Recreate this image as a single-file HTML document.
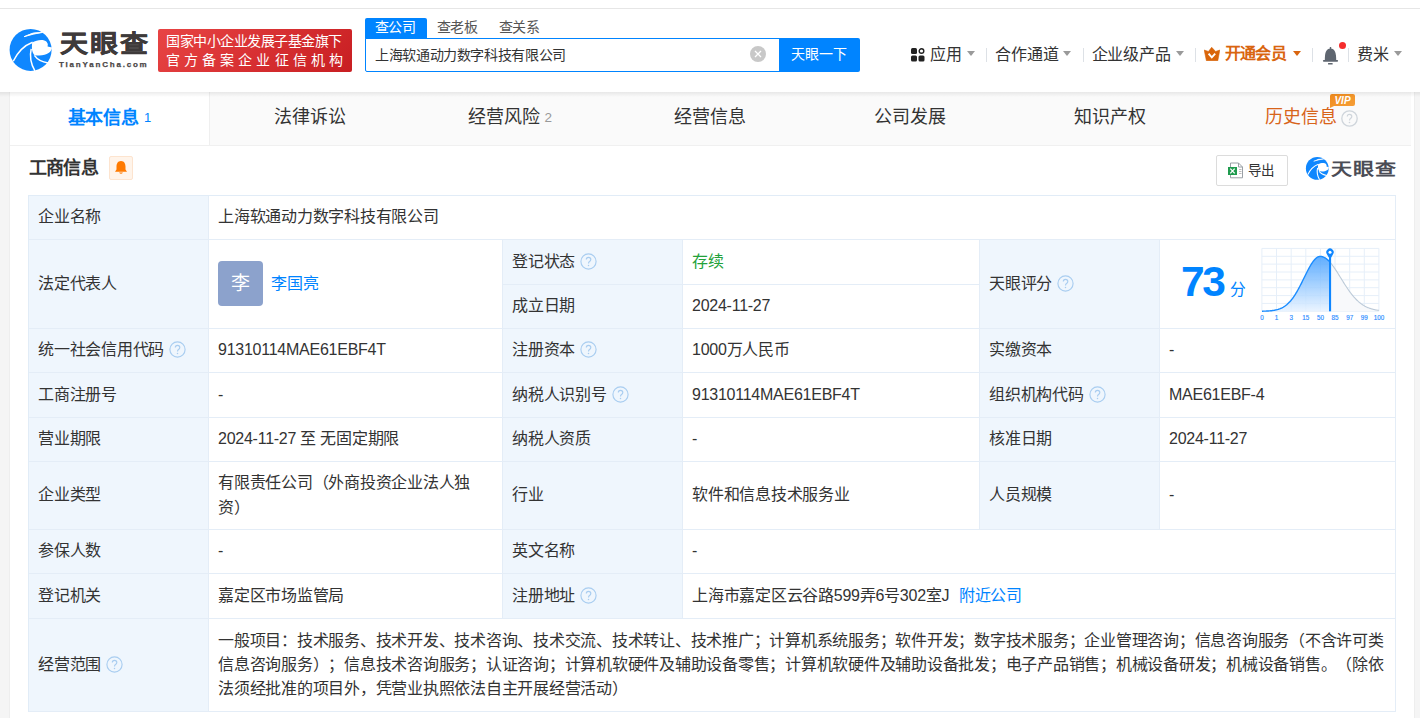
<!DOCTYPE html>
<html lang="zh-CN"><head><meta charset="utf-8">
<style>
*{margin:0;padding:0;box-sizing:border-box}
html,body{text-spacing-trim:space-all;width:1420px;height:718px;overflow:hidden;background:#f5f5f5;font-family:"Liberation Sans",sans-serif;color:#333}
.abs{position:absolute}
#top{position:absolute;left:0;top:0;width:1420px;height:8px;background:#fff}
#topline{position:absolute;left:0;top:8px;width:1420px;height:1px;background:#e6e6e6}
#hdr{position:absolute;left:0;top:9px;width:1420px;height:83px;background:#fff}
.t{position:absolute;white-space:nowrap;line-height:1}
#card{position:absolute;left:9px;top:92px;width:1406px;height:700px;background:#fff;border-left:1px solid #eeeeee;border-right:1px solid #eeeeee}
.tab{position:absolute;top:0;height:53px;width:200px;background:#fafafa;border-right:1px solid #f0f0f0;border-bottom:1px solid #f0f0f0}
.tab.on{background:#fff;border-bottom-color:#fff}
.cell{position:absolute;white-space:nowrap;border-right:1px solid #e4edf7;border-bottom:1px solid #e4edf7;font-size:16px;letter-spacing:-0.25px;line-height:24.3px;padding-left:9px;display:flex;align-items:center}
.lab{background:#eff6fd}
.qs{margin-left:5px;flex:none;position:relative;top:-1px}
.tri{width:0;height:0;border-left:4px solid transparent;border-right:4px solid transparent;border-top:5px solid #9a9a9a}
.sep{position:absolute;top:48px;width:1px;height:14px;background:#dde1e6}
.q2{width:16px;height:16px;border:1.4px solid #ccd3da;border-radius:50%;color:#c2c9d0;font-size:12px;text-align:center;line-height:13px}
.av{display:inline-block;position:relative;top:-1px;width:45px;height:45px;border-radius:4px;background:#8ca2cc;color:#fff;font-size:19px;text-align:center;line-height:45px;margin-right:8px}
.lk{color:#0084ff}
</style></head><body>
<div id="top"></div><div id="topline"></div>
<div id="hdr"></div>
<svg class="abs" style="left:8px;top:27px" width="47" height="47" viewBox="0 0 47 47"><circle cx="22.6" cy="22.9" r="21" fill="#0f87fe"/>
<path d="M16 9.7 Q25 4.6 34.7 5.4 Q26 6.6 16 9.7Z" fill="#fff" stroke="#fff" stroke-width=".9"/>
<path d="M5.2 34.3 Q12 20 24.6 15.2" fill="none" stroke="#fff" stroke-width="1.5"/>
<path d="M24.2 15.4 C29 12.6 36 12 38.6 14.7 Q40.6 17 39.6 19.4 L44 20.6 C43.6 25.5 38 29.8 26.8 28.3 C24.2 26 23.4 22 24.2 15.4Z" fill="#fff"/>
<path d="M23.2 21.8 Q20.6 33 26.9 43.8" fill="none" stroke="#fff" stroke-width="1.5"/>
<path d="M26.4 28.4 Q30.5 34.5 40.2 35.9" fill="none" stroke="#fff" stroke-width="1.5"/></svg>
<div class="t" style="left:60px;top:32px;font-size:28px;font-weight:700;color:#3e3a3a;letter-spacing:2px;-webkit-text-stroke:.5px #3e3a3a;transform:scaleY(.857);transform-origin:0 0">天眼查</div>
<div class="t" style="left:59px;top:61px;font-size:8px;font-weight:700;color:#4a4646;letter-spacing:1.8px;-webkit-text-stroke:.25px #4a4646">TianYanCha.com</div>
<div class="abs" style="left:158px;top:29px;width:194px;height:43px;border-radius:2px;background:linear-gradient(135deg,#e84444,#c81e22)"></div>
<div class="t" style="left:166px;top:34px;font-size:14px;letter-spacing:-0.5px;color:#fff">国家中小企业发展子基金旗下</div>
<div class="t" style="left:166px;top:53px;font-size:14px;color:#fff;letter-spacing:4.1px">官方备案企业征信机构</div>
<div class="abs" style="left:365px;top:18px;width:62px;height:21px;background:#0084ff;border-radius:2px 2px 0 0"></div>
<div class="t" style="left:375px;top:20px;font-size:14px;letter-spacing:-0.7px;color:#fff">查公司</div>
<div class="t" style="left:437px;top:20px;font-size:14px;letter-spacing:-0.7px;color:#555">查老板</div>
<div class="t" style="left:499px;top:20px;font-size:14px;letter-spacing:-0.7px;color:#555">查关系</div>
<div class="abs" style="left:365px;top:38px;width:420px;height:34px;border:1px solid #0084ff;border-radius:0 0 0 2px;background:#fff"></div>
<div class="t" style="left:375px;top:47.5px;font-size:14px;letter-spacing:-0.37px;color:#333">上海软通动力数字科技有限公司</div>
<svg class="abs" style="left:750px;top:46px" width="16" height="16" viewBox="0 0 16 16"><circle cx="8" cy="8" r="8" fill="#c8c8c8"/><path d="M5 5L11 11M11 5L5 11" stroke="#fff" stroke-width="1.3"/></svg>
<div class="abs" style="left:779px;top:38px;width:81px;height:34px;background:#0084ff;border-radius:0 2px 2px 0"></div>
<div class="t" style="left:791px;top:47px;font-size:14px;color:#fff">天眼一下</div>
<svg class="abs" style="left:911px;top:48px" width="14" height="14" viewBox="0 0 14 14"><rect x="0" y="0" width="6" height="6" rx="1.5" fill="#222"/><circle cx="10.5" cy="3" r="2.3" fill="none" stroke="#222" stroke-width="1.4"/><rect x="0" y="7.5" width="6" height="6" rx="1.5" fill="#222"/><rect x="7.5" y="7.5" width="6" height="6" rx="1.5" fill="#222"/></svg>
<div class="t" style="left:930px;top:46.5px;font-size:16px;letter-spacing:-0.5px;color:#333">应用</div>
<div class="abs tri" style="left:967px;top:51px"></div>
<div class="abs sep" style="left:986px"></div>
<div class="t" style="left:995px;top:46.5px;font-size:16px;letter-spacing:-0.15px;color:#333">合作通道</div>
<div class="abs tri" style="left:1063px;top:51px"></div>
<div class="abs sep" style="left:1083px"></div>
<div class="t" style="left:1091.5px;top:46.5px;font-size:16px;letter-spacing:-0.15px;color:#333">企业级产品</div>
<div class="abs tri" style="left:1176px;top:51px"></div>
<div class="abs sep" style="left:1195px"></div>
<svg class="abs" style="left:1204px;top:47px" width="16" height="14" viewBox="0 0 16 14"><path d="M0.2 3 L4.4 4.5 L7.7 0.3 L11.6 4.5 L15.8 3 L13.8 13.7 L2.4 13.7 Z" fill="#d9650a" stroke="#d9650a" stroke-width=".6" stroke-linejoin="round"/><path d="M4.6 6.6 L7.8 10.4 L11.2 6.6" stroke="#fff" stroke-width="1.9" fill="none"/></svg>
<div class="t" style="left:1224.5px;top:45.5px;font-size:16px;letter-spacing:-0.6px;font-weight:700;color:#d9650f">开通会员</div>
<div class="abs tri" style="left:1293px;top:51px;border-top-color:#d9650f"></div>
<div class="abs sep" style="left:1312px"></div>
<svg class="abs" style="left:1322px;top:46px" width="17" height="19" viewBox="0 0 17 19"><path d="M2.8 14.2 C2.8 6.5 4.2 2.6 8.5 2.6 C12.8 2.6 14.2 6.5 14.2 14.2Z" fill="#5f6670"/><rect x="0.9" y="13.9" width="15.2" height="1.8" rx=".9" fill="#5f6670"/><rect x="6" y="17" width="4.7" height="1.5" rx=".5" fill="#5f6670"/><rect x="7.8" y="1" width="1.4" height="2" fill="#5f6670"/></svg>
<div class="abs" style="left:1338.8px;top:41.7px;width:7.2px;height:7.2px;border-radius:50%;background:#f52c2c"></div>
<div class="abs sep" style="left:1348px"></div>
<div class="t" style="left:1357px;top:46.5px;font-size:16px;color:#333">费米</div>
<div class="abs tri" style="left:1394px;top:51px"></div>

<div id="card"></div>
<div class="abs" style="left:10px;top:92px;width:1401px;height:54px;background:#fafafa;border-bottom:1px solid #f0f0f0"></div>
<div class="abs" style="left:10px;top:92px;width:199px;height:53px;background:#fff"></div>
<div class="abs" style="left:209px;top:92px;width:1px;height:53px;background:#efefef"></div>
<div class="t" style="left:67.5px;top:108.5px;font-size:18px;letter-spacing:-0.3px;font-weight:700;color:#0084ff">基本信息</div>
<div class="t" style="left:144px;top:111px;font-size:13px;color:#0084ff">1</div>
<div class="t" style="left:274px;top:108px;font-size:18px;color:#333">法律诉讼</div>
<div class="t" style="left:468px;top:108px;font-size:18px;color:#333">经营风险</div>
<div class="t" style="left:544.5px;top:111px;font-size:13.5px;color:#999">2</div>
<div class="t" style="left:674px;top:108px;font-size:18px;color:#333">经营信息</div>
<div class="t" style="left:874px;top:108px;font-size:18px;color:#333">公司发展</div>
<div class="t" style="left:1074px;top:108px;font-size:18px;color:#333">知识产权</div>
<div class="t" style="left:1265px;top:108px;font-size:18px;color:#d8641a">历史信息</div>
<svg class="abs" style="left:1341px;top:109.5px" width="17" height="17" viewBox="0 0 17 17"><circle cx="8.5" cy="8.5" r="7.7" fill="none" stroke="#cfd5db" stroke-width="1.3"/><path d="M6.3 6.6Q6.3 4.3 8.5 4.3Q10.8 4.3 10.8 6.4Q10.8 7.7 9.5 8.4Q8.5 9 8.5 10.6" fill="none" stroke="#cfd5db" stroke-width="1.2"/><circle cx="8.5" cy="12.5" r=".8" fill="#cfd5db"/></svg>
<svg class="abs" style="left:1330px;top:94px" width="26" height="15" viewBox="0 0 26 15"><defs><linearGradient id="vg" x1="0" y1="0" x2="1" y2="1"><stop offset="0" stop-color="#f08a1c"/><stop offset="1" stop-color="#f6a03a"/></linearGradient></defs><path d="M2 0H23Q25 0 25 2V10Q25 12 23 12H4L0 14V2Q0 0 2 0Z" fill="url(#vg)"/><text x="12.5" y="10" text-anchor="middle" font-family="Liberation Sans" font-style="italic" font-weight="700" font-size="10" fill="#fff">VIP</text></svg>

<div class="t" style="left:28.5px;top:158.5px;font-size:18px;letter-spacing:-0.6px;font-weight:700;color:#333">工商信息</div>
<div class="abs" style="left:109px;top:156px;width:24px;height:24px;background:#fff4ea;border:1px solid #fde4cf;border-radius:2px"></div>
<svg class="abs" style="left:114px;top:160px" width="14" height="15" viewBox="0 0 14 15"><path d="M7 1C3.6 1 2.5 4 2.5 6.5V9.5L1 11.8H13L11.5 9.5V6.5C11.5 4 10.4 1 7 1Z" fill="#ff7a00"/><path d="M5 12.5Q7 15 9 12.5Z" fill="#ff7a00"/></svg>

<div class="abs" style="left:1216px;top:155px;width:72px;height:31px;border:1px solid #dcdcdc;border-radius:2px;background:#fff"></div>
<svg class="abs" style="left:1227px;top:162px" width="17" height="17" viewBox="0 0 17 17"><path d="M3.5 1H11.5L15.5 5V15.8H3.5Z" fill="#fff" stroke="#9aa0a6" stroke-width="1"/><path d="M11.5 1V5H15.5" fill="none" stroke="#9aa0a6" stroke-width="1"/><rect x="12" y="7" width="2.5" height="1" fill="#bbb"/><rect x="12" y="9" width="2.5" height="1" fill="#bbb"/><rect x="12" y="11" width="2.5" height="1" fill="#bbb"/><rect x="1" y="5" width="9" height="8" fill="#1f9b4e"/><path d="M3.3 6.6L7.7 11.4M7.7 6.6L3.3 11.4" stroke="#fff" stroke-width="1.3"/></svg>
<div class="t" style="left:1247.5px;top:164px;font-size:13.5px;color:#333">导出</div>
<svg class="abs" style="left:1304.5px;top:155.5px" width="25.5" height="25.5" viewBox="0 0 47 47"><circle cx="22.6" cy="22.9" r="21" fill="#0f87fe"/>
<path d="M16 9.7 Q25 4.6 34.7 5.4 Q26 6.6 16 9.7Z" fill="#fff" stroke="#fff" stroke-width=".9"/>
<path d="M5.2 34.3 Q12 20 24.6 15.2" fill="none" stroke="#fff" stroke-width="2"/>
<path d="M24.2 15.4 C29 12.6 36 12 38.6 14.7 Q40.6 17 39.6 19.4 L44 20.6 C43.6 25.5 38 29.8 26.8 28.3 C24.2 26 23.4 22 24.2 15.4Z" fill="#fff"/>
<path d="M23.2 21.8 Q20.6 33 26.9 43.8" fill="none" stroke="#fff" stroke-width="2"/>
<path d="M26.4 28.4 Q30.5 34.5 40.2 35.9" fill="none" stroke="#fff" stroke-width="2"/></svg>
<div class="t" style="left:1331px;top:160px;font-size:21px;font-weight:700;color:#4a4c55;letter-spacing:1px;transform:scaleY(.81);transform-origin:0 0">天眼查</div>


<div class="abs" style="left:28px;top:195px;width:1368px;height:517px;border-top:1px solid #e1ecf7;border-left:1px solid #e1ecf7;background:#fff"></div>
<div class="cell lab" style="left:29px;top:196px;width:180px;height:44px;">企业名称</div>
<div class="cell" style="left:209px;top:196px;width:1187px;height:44px;">上海软通动力数字科技有限公司</div>
<div class="cell lab" style="left:29px;top:240px;width:180px;height:89px;">法定代表人</div>
<div class="cell" style="left:209px;top:240px;width:294px;height:89px;"><span class="av">李</span><span class="lk">李国亮</span></div>
<div class="cell lab" style="left:503px;top:240px;width:180px;height:45px;">登记状态<svg class="qs" width="17" height="17" viewBox="0 0 17 17"><circle cx="8.5" cy="8.5" r="7.6" fill="none" stroke="#a9cdf0" stroke-width="1.15"/><path d="M6.3 6.6Q6.3 4.3 8.5 4.3Q10.8 4.3 10.8 6.4Q10.8 7.7 9.5 8.4Q8.5 9 8.5 10.6" fill="none" stroke="#a9cdf0" stroke-width="1.15"/><circle cx="8.5" cy="12.5" r=".75" fill="#a9cdf0"/></svg></div>
<div class="cell" style="left:683px;top:240px;width:297px;height:45px;"><span style="color:#23a23a">存续</span></div>
<div class="cell lab" style="left:503px;top:285px;width:180px;height:44px;">成立日期</div>
<div class="cell" style="left:683px;top:285px;width:297px;height:44px;">2024-11-27</div>
<div class="cell lab" style="left:980px;top:240px;width:180px;height:89px;">天眼评分<svg class="qs" width="17" height="17" viewBox="0 0 17 17"><circle cx="8.5" cy="8.5" r="7.6" fill="none" stroke="#a9cdf0" stroke-width="1.15"/><path d="M6.3 6.6Q6.3 4.3 8.5 4.3Q10.8 4.3 10.8 6.4Q10.8 7.7 9.5 8.4Q8.5 9 8.5 10.6" fill="none" stroke="#a9cdf0" stroke-width="1.15"/><circle cx="8.5" cy="12.5" r=".75" fill="#a9cdf0"/></svg></div>
<div class="cell" style="left:1160px;top:240px;width:236px;height:89px;"></div>
<div class="cell lab" style="left:29px;top:329px;width:180px;height:44px;">统一社会信用代码<svg class="qs" width="17" height="17" viewBox="0 0 17 17"><circle cx="8.5" cy="8.5" r="7.6" fill="none" stroke="#a9cdf0" stroke-width="1.15"/><path d="M6.3 6.6Q6.3 4.3 8.5 4.3Q10.8 4.3 10.8 6.4Q10.8 7.7 9.5 8.4Q8.5 9 8.5 10.6" fill="none" stroke="#a9cdf0" stroke-width="1.15"/><circle cx="8.5" cy="12.5" r=".75" fill="#a9cdf0"/></svg></div>
<div class="cell" style="left:209px;top:329px;width:294px;height:44px;">91310114MAE61EBF4T</div>
<div class="cell lab" style="left:503px;top:329px;width:180px;height:44px;">注册资本<svg class="qs" width="17" height="17" viewBox="0 0 17 17"><circle cx="8.5" cy="8.5" r="7.6" fill="none" stroke="#a9cdf0" stroke-width="1.15"/><path d="M6.3 6.6Q6.3 4.3 8.5 4.3Q10.8 4.3 10.8 6.4Q10.8 7.7 9.5 8.4Q8.5 9 8.5 10.6" fill="none" stroke="#a9cdf0" stroke-width="1.15"/><circle cx="8.5" cy="12.5" r=".75" fill="#a9cdf0"/></svg></div>
<div class="cell" style="left:683px;top:329px;width:297px;height:44px;">1000万人民币</div>
<div class="cell lab" style="left:980px;top:329px;width:180px;height:44px;">实缴资本</div>
<div class="cell" style="left:1160px;top:329px;width:236px;height:44px;">-</div>
<div class="cell lab" style="left:29px;top:373px;width:180px;height:45px;">工商注册号</div>
<div class="cell" style="left:209px;top:373px;width:294px;height:45px;">-</div>
<div class="cell lab" style="left:503px;top:373px;width:180px;height:45px;">纳税人识别号<svg class="qs" width="17" height="17" viewBox="0 0 17 17"><circle cx="8.5" cy="8.5" r="7.6" fill="none" stroke="#a9cdf0" stroke-width="1.15"/><path d="M6.3 6.6Q6.3 4.3 8.5 4.3Q10.8 4.3 10.8 6.4Q10.8 7.7 9.5 8.4Q8.5 9 8.5 10.6" fill="none" stroke="#a9cdf0" stroke-width="1.15"/><circle cx="8.5" cy="12.5" r=".75" fill="#a9cdf0"/></svg></div>
<div class="cell" style="left:683px;top:373px;width:297px;height:45px;">91310114MAE61EBF4T</div>
<div class="cell lab" style="left:980px;top:373px;width:180px;height:45px;">组织机构代码<svg class="qs" width="17" height="17" viewBox="0 0 17 17"><circle cx="8.5" cy="8.5" r="7.6" fill="none" stroke="#a9cdf0" stroke-width="1.15"/><path d="M6.3 6.6Q6.3 4.3 8.5 4.3Q10.8 4.3 10.8 6.4Q10.8 7.7 9.5 8.4Q8.5 9 8.5 10.6" fill="none" stroke="#a9cdf0" stroke-width="1.15"/><circle cx="8.5" cy="12.5" r=".75" fill="#a9cdf0"/></svg></div>
<div class="cell" style="left:1160px;top:373px;width:236px;height:45px;">MAE61EBF-4</div>
<div class="cell lab" style="left:29px;top:418px;width:180px;height:44px;">营业期限</div>
<div class="cell" style="left:209px;top:418px;width:294px;height:44px;">2024-11-27 至 无固定期限</div>
<div class="cell lab" style="left:503px;top:418px;width:180px;height:44px;">纳税人资质</div>
<div class="cell" style="left:683px;top:418px;width:297px;height:44px;">-</div>
<div class="cell lab" style="left:980px;top:418px;width:180px;height:44px;">核准日期</div>
<div class="cell" style="left:1160px;top:418px;width:236px;height:44px;">2024-11-27</div>
<div class="cell lab" style="left:29px;top:462px;width:180px;height:68px;">企业类型</div>
<div class="cell" style="left:209px;top:462px;width:294px;height:68px;">有限责任公司（外商投资企业法人独<br>资）</div>
<div class="cell lab" style="left:503px;top:462px;width:180px;height:68px;">行业</div>
<div class="cell" style="left:683px;top:462px;width:297px;height:68px;">软件和信息技术服务业</div>
<div class="cell lab" style="left:980px;top:462px;width:180px;height:68px;">人员规模</div>
<div class="cell" style="left:1160px;top:462px;width:236px;height:68px;">-</div>
<div class="cell lab" style="left:29px;top:530px;width:180px;height:44px;">参保人数</div>
<div class="cell" style="left:209px;top:530px;width:294px;height:44px;">-</div>
<div class="cell lab" style="left:503px;top:530px;width:180px;height:44px;">英文名称</div>
<div class="cell" style="left:683px;top:530px;width:713px;height:44px;">-</div>
<div class="cell lab" style="left:29px;top:574px;width:180px;height:45px;">登记机关</div>
<div class="cell" style="left:209px;top:574px;width:294px;height:45px;">嘉定区市场监管局</div>
<div class="cell lab" style="left:503px;top:574px;width:180px;height:45px;">注册地址<svg class="qs" width="17" height="17" viewBox="0 0 17 17"><circle cx="8.5" cy="8.5" r="7.6" fill="none" stroke="#a9cdf0" stroke-width="1.15"/><path d="M6.3 6.6Q6.3 4.3 8.5 4.3Q10.8 4.3 10.8 6.4Q10.8 7.7 9.5 8.4Q8.5 9 8.5 10.6" fill="none" stroke="#a9cdf0" stroke-width="1.15"/><circle cx="8.5" cy="12.5" r=".75" fill="#a9cdf0"/></svg></div>
<div class="cell" style="left:683px;top:574px;width:713px;height:45px;">上海市嘉定区云谷路599弄6号302室J<span class="lk" style="margin-left:9.5px">附近公司</span></div>
<div class="cell lab" style="left:29px;top:619px;width:180px;height:93px;">经营范围<svg class="qs" width="17" height="17" viewBox="0 0 17 17"><circle cx="8.5" cy="8.5" r="7.6" fill="none" stroke="#a9cdf0" stroke-width="1.15"/><path d="M6.3 6.6Q6.3 4.3 8.5 4.3Q10.8 4.3 10.8 6.4Q10.8 7.7 9.5 8.4Q8.5 9 8.5 10.6" fill="none" stroke="#a9cdf0" stroke-width="1.15"/><circle cx="8.5" cy="12.5" r=".75" fill="#a9cdf0"/></svg></div>
<div class="cell" style="left:209px;top:619px;width:1187px;height:93px;">一般项目：技术服务、技术开发、技术咨询、技术交流、技术转让、技术推广；计算机系统服务；软件开发；数字技术服务；企业管理咨询；信息咨询服务（不含许可类<br>信息咨询服务）；信息技术咨询服务；认证咨询；计算机软硬件及辅助设备零售；计算机软硬件及辅助设备批发；电子产品销售；机械设备研发；机械设备销售。（除依<br>法须经批准的项目外，凭营业执照依法自主开展经营活动）</div>
<svg class="abs" style="left:1255px;top:242px" width="135" height="83" viewBox="1255 242 135 83">
<defs><linearGradient id="cg" x1="0" y1="0" x2="0" y2="1"><stop offset="0" stop-color="#3d9cff"/><stop offset="1" stop-color="#e6f2ff"/></linearGradient></defs>
<g stroke="#e6eff9" stroke-width="1"><line x1="1261.9" y1="248.4" x2="1261.9" y2="311.3"/><line x1="1276.5" y1="248.4" x2="1276.5" y2="311.3"/><line x1="1291.2" y1="248.4" x2="1291.2" y2="311.3"/><line x1="1305.8" y1="248.4" x2="1305.8" y2="311.3"/><line x1="1320.4" y1="248.4" x2="1320.4" y2="311.3"/><line x1="1335.0" y1="248.4" x2="1335.0" y2="311.3"/><line x1="1349.7" y1="248.4" x2="1349.7" y2="311.3"/><line x1="1364.3" y1="248.4" x2="1364.3" y2="311.3"/><line x1="1378.9" y1="248.4" x2="1378.9" y2="311.3"/><line x1="1261.9" y1="248.4" x2="1378.9" y2="248.4"/><line x1="1261.9" y1="256.3" x2="1378.9" y2="256.3"/><line x1="1261.9" y1="264.1" x2="1378.9" y2="264.1"/><line x1="1261.9" y1="272.0" x2="1378.9" y2="272.0"/><line x1="1261.9" y1="279.9" x2="1378.9" y2="279.9"/><line x1="1261.9" y1="287.7" x2="1378.9" y2="287.7"/><line x1="1261.9" y1="295.6" x2="1378.9" y2="295.6"/><line x1="1261.9" y1="303.4" x2="1378.9" y2="303.4"/><line x1="1261.9" y1="311.3" x2="1378.9" y2="311.3"/></g>
<polygon points="1330.0,262.21 1330.5,262.79 1331.0,263.39 1331.5,264.01 1332.0,264.65 1332.5,265.31 1333.0,265.99 1333.5,266.68 1334.0,267.39 1334.5,268.11 1335.0,268.85 1335.5,269.59 1336.0,270.35 1336.5,271.12 1337.0,271.90 1337.5,272.69 1338.0,273.48 1338.5,274.28 1339.0,275.09 1339.5,275.89 1340.0,276.70 1340.5,277.51 1341.0,278.33 1341.5,279.14 1342.0,279.95 1342.5,280.76 1343.0,281.56 1343.5,282.36 1344.0,283.16 1344.5,283.95 1345.0,284.73 1345.5,285.51 1346.0,286.28 1346.5,287.04 1347.0,287.79 1347.5,288.53 1348.0,289.27 1348.5,289.99 1349.0,290.70 1349.5,291.39 1350.0,292.08 1350.5,292.75 1351.0,293.41 1351.5,294.06 1352.0,294.69 1352.5,295.31 1353.0,295.92 1353.5,296.51 1354.0,297.08 1354.5,297.65 1355.0,298.20 1355.5,298.73 1356.0,299.25 1356.5,299.75 1357.0,300.24 1357.5,300.72 1358.0,301.18 1358.5,301.63 1359.0,302.06 1359.5,302.48 1360.0,302.88 1360.5,303.27 1361.0,303.65 1361.5,304.01 1362.0,304.36 1362.5,304.70 1363.0,305.03 1363.5,305.34 1364.0,305.64 1364.5,305.93 1365.0,306.21 1365.5,306.47 1366.0,306.72 1366.5,306.97 1367.0,307.20 1367.5,307.42 1368.0,307.64 1368.5,307.84 1369.0,308.03 1369.5,308.22 1370.0,308.39 1370.5,308.56 1371.0,308.72 1371.5,308.87 1372.0,309.02 1372.5,309.15 1373.0,309.28 1373.5,309.41 1374.0,309.52 1374.5,309.63 1375.0,309.74 1375.5,309.84 1376.0,309.93 1376.5,310.02 1377.0,310.10 1377.5,310.18 1378.0,310.25 1378.5,310.32 1379.0,310.39 1378.9,311.3 1330,311.3" fill="#f8f9fb"/>
<polyline points="1330.0,262.21 1330.5,262.79 1331.0,263.39 1331.5,264.01 1332.0,264.65 1332.5,265.31 1333.0,265.99 1333.5,266.68 1334.0,267.39 1334.5,268.11 1335.0,268.85 1335.5,269.59 1336.0,270.35 1336.5,271.12 1337.0,271.90 1337.5,272.69 1338.0,273.48 1338.5,274.28 1339.0,275.09 1339.5,275.89 1340.0,276.70 1340.5,277.51 1341.0,278.33 1341.5,279.14 1342.0,279.95 1342.5,280.76 1343.0,281.56 1343.5,282.36 1344.0,283.16 1344.5,283.95 1345.0,284.73 1345.5,285.51 1346.0,286.28 1346.5,287.04 1347.0,287.79 1347.5,288.53 1348.0,289.27 1348.5,289.99 1349.0,290.70 1349.5,291.39 1350.0,292.08 1350.5,292.75 1351.0,293.41 1351.5,294.06 1352.0,294.69 1352.5,295.31 1353.0,295.92 1353.5,296.51 1354.0,297.08 1354.5,297.65 1355.0,298.20 1355.5,298.73 1356.0,299.25 1356.5,299.75 1357.0,300.24 1357.5,300.72 1358.0,301.18 1358.5,301.63 1359.0,302.06 1359.5,302.48 1360.0,302.88 1360.5,303.27 1361.0,303.65 1361.5,304.01 1362.0,304.36 1362.5,304.70 1363.0,305.03 1363.5,305.34 1364.0,305.64 1364.5,305.93 1365.0,306.21 1365.5,306.47 1366.0,306.72 1366.5,306.97 1367.0,307.20 1367.5,307.42 1368.0,307.64 1368.5,307.84 1369.0,308.03 1369.5,308.22 1370.0,308.39 1370.5,308.56 1371.0,308.72 1371.5,308.87 1372.0,309.02 1372.5,309.15 1373.0,309.28 1373.5,309.41 1374.0,309.52 1374.5,309.63 1375.0,309.74 1375.5,309.84 1376.0,309.93 1376.5,310.02 1377.0,310.10 1377.5,310.18 1378.0,310.25 1378.5,310.32 1379.0,310.39" fill="none" stroke="#bccad8" stroke-width="1.1"/>
<polygon points="1262.0,311.21 1262.5,311.20 1263.0,311.19 1263.5,311.17 1264.0,311.16 1264.5,311.14 1265.0,311.13 1265.5,311.11 1266.0,311.09 1266.5,311.06 1267.0,311.04 1267.5,311.01 1268.0,310.98 1268.5,310.95 1269.0,310.91 1269.5,310.87 1270.0,310.83 1270.5,310.78 1271.0,310.73 1271.5,310.68 1272.0,310.62 1272.5,310.55 1273.0,310.49 1273.5,310.41 1274.0,310.33 1274.5,310.24 1275.0,310.15 1275.5,310.04 1276.0,309.93 1276.5,309.82 1277.0,309.69 1277.5,309.55 1278.0,309.41 1278.5,309.25 1279.0,309.08 1279.5,308.91 1280.0,308.72 1280.5,308.51 1281.0,308.30 1281.5,308.07 1282.0,307.83 1282.5,307.57 1283.0,307.30 1283.5,307.01 1284.0,306.70 1284.5,306.38 1285.0,306.04 1285.5,305.68 1286.0,305.30 1286.5,304.90 1287.0,304.49 1287.5,304.05 1288.0,303.59 1288.5,303.11 1289.0,302.61 1289.5,302.09 1290.0,301.55 1290.5,300.98 1291.0,300.39 1291.5,299.77 1292.0,299.14 1292.5,298.48 1293.0,297.80 1293.5,297.09 1294.0,296.36 1294.5,295.61 1295.0,294.84 1295.5,294.05 1296.0,293.23 1296.5,292.39 1297.0,291.54 1297.5,290.66 1298.0,289.77 1298.5,288.85 1299.0,287.92 1299.5,286.98 1300.0,286.02 1300.5,285.05 1301.0,284.06 1301.5,283.07 1302.0,282.07 1302.5,281.06 1303.0,280.04 1303.5,279.02 1304.0,278.00 1304.5,276.98 1305.0,275.96 1305.5,274.95 1306.0,273.94 1306.5,272.94 1307.0,271.94 1307.5,270.97 1308.0,270.00 1308.5,269.06 1309.0,268.13 1309.5,267.22 1310.0,266.34 1310.5,265.48 1311.0,264.65 1311.5,263.85 1312.0,263.08 1312.5,262.34 1313.0,261.64 1313.5,260.98 1314.0,260.35 1314.5,259.77 1315.0,259.23 1315.5,258.73 1316.0,258.28 1316.5,257.87 1317.0,257.51 1317.5,257.20 1318.0,256.94 1318.5,256.73 1319.0,256.57 1319.5,256.47 1320.0,256.41 1320.5,256.40 1321.0,256.43 1321.5,256.49 1322.0,256.59 1322.5,256.72 1323.0,256.87 1323.5,257.06 1324.0,257.29 1324.5,257.54 1325.0,257.82 1325.5,258.14 1326.0,258.48 1326.5,258.85 1327.0,259.26 1327.5,259.68 1328.0,260.14 1328.5,260.62 1329.0,261.13 1329.5,261.66 1330.0,262.21 1330,311.3 1261.9,311.3" fill="url(#cg)" opacity=".82"/>
<polyline points="1262.0,311.21 1262.5,311.20 1263.0,311.19 1263.5,311.17 1264.0,311.16 1264.5,311.14 1265.0,311.13 1265.5,311.11 1266.0,311.09 1266.5,311.06 1267.0,311.04 1267.5,311.01 1268.0,310.98 1268.5,310.95 1269.0,310.91 1269.5,310.87 1270.0,310.83 1270.5,310.78 1271.0,310.73 1271.5,310.68 1272.0,310.62 1272.5,310.55 1273.0,310.49 1273.5,310.41 1274.0,310.33 1274.5,310.24 1275.0,310.15 1275.5,310.04 1276.0,309.93 1276.5,309.82 1277.0,309.69 1277.5,309.55 1278.0,309.41 1278.5,309.25 1279.0,309.08 1279.5,308.91 1280.0,308.72 1280.5,308.51 1281.0,308.30 1281.5,308.07 1282.0,307.83 1282.5,307.57 1283.0,307.30 1283.5,307.01 1284.0,306.70 1284.5,306.38 1285.0,306.04 1285.5,305.68 1286.0,305.30 1286.5,304.90 1287.0,304.49 1287.5,304.05 1288.0,303.59 1288.5,303.11 1289.0,302.61 1289.5,302.09 1290.0,301.55 1290.5,300.98 1291.0,300.39 1291.5,299.77 1292.0,299.14 1292.5,298.48 1293.0,297.80 1293.5,297.09 1294.0,296.36 1294.5,295.61 1295.0,294.84 1295.5,294.05 1296.0,293.23 1296.5,292.39 1297.0,291.54 1297.5,290.66 1298.0,289.77 1298.5,288.85 1299.0,287.92 1299.5,286.98 1300.0,286.02 1300.5,285.05 1301.0,284.06 1301.5,283.07 1302.0,282.07 1302.5,281.06 1303.0,280.04 1303.5,279.02 1304.0,278.00 1304.5,276.98 1305.0,275.96 1305.5,274.95 1306.0,273.94 1306.5,272.94 1307.0,271.94 1307.5,270.97 1308.0,270.00 1308.5,269.06 1309.0,268.13 1309.5,267.22 1310.0,266.34 1310.5,265.48 1311.0,264.65 1311.5,263.85 1312.0,263.08 1312.5,262.34 1313.0,261.64 1313.5,260.98 1314.0,260.35 1314.5,259.77 1315.0,259.23 1315.5,258.73 1316.0,258.28 1316.5,257.87 1317.0,257.51 1317.5,257.20 1318.0,256.94 1318.5,256.73 1319.0,256.57 1319.5,256.47 1320.0,256.41 1320.5,256.40 1321.0,256.43 1321.5,256.49 1322.0,256.59 1322.5,256.72 1323.0,256.87 1323.5,257.06 1324.0,257.29 1324.5,257.54 1325.0,257.82 1325.5,258.14 1326.0,258.48 1326.5,258.85 1327.0,259.26 1327.5,259.68 1328.0,260.14 1328.5,260.62 1329.0,261.13 1329.5,261.66 1330.0,262.21" fill="none" stroke="#1a8cff" stroke-width="1.4"/>
<rect x="1329" y="256" width="2.1" height="55.3" fill="#0f86ff"/>
<path d="M1330 259.5 L1326.9 254.2 A3.7 3.7 0 1 1 1333.1 254.2 Z" fill="#0f86ff"/>
<circle cx="1330" cy="252.3" r="1.5" fill="#fff"/>
<g font-family="Liberation Sans" font-size="6.3" fill="#2b8cff" stroke="#2b8cff" stroke-width=".15" text-anchor="middle"><text x="1261.9" y="320">0</text><text x="1276.5" y="320">1</text><text x="1291.2" y="320">3</text><text x="1305.8" y="320">15</text><text x="1320.4" y="320">50</text><text x="1335.0" y="320">85</text><text x="1349.7" y="320">97</text><text x="1364.3" y="320">99</text><text x="1378.9" y="320">100</text></g>
</svg>
<div class="t" style="left:1181px;top:261px;font-size:42.5px;letter-spacing:-2.5px;font-weight:700;color:#0084ff">73</div>
<div class="t" style="left:1229.5px;top:282px;font-size:15.75px;color:#0084ff">分</div>
<div class="abs" style="left:0;top:92px;width:1420px;height:5px;background:linear-gradient(rgba(0,0,0,.075),rgba(0,0,0,0))"></div>
</body></html>
